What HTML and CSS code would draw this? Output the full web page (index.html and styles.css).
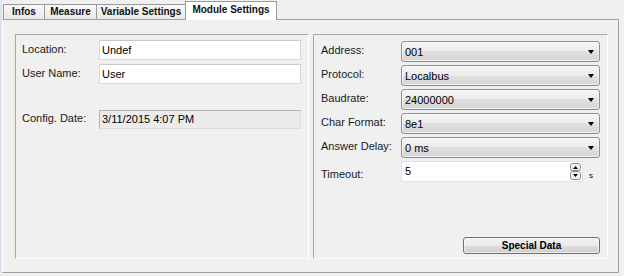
FILE: index.html
```html
<!DOCTYPE html>
<html>
<head>
<meta charset="utf-8">
<link rel="stylesheet" href="styles.css">
</head>
<body>
<div class="app">
  <div class="tabs">
    <div class="tab tab-infos">Infos</div>
    <div class="tab tab-measure">Measure</div>
    <div class="tab tab-var">Variable Settings</div>
    <div class="tab tab-active">Module Settings</div>
  </div>
  <div class="page">
    <div class="group group-left">
      <div class="row">
        <span class="label label-left">Location:</span>
        <div class="textbox">Undef</div>
      </div>
      <div class="row">
        <span class="label label-left">User Name:</span>
        <div class="textbox">User</div>
      </div>
      <div class="row row-date">
        <span class="label label-left">Config. Date:</span>
        <div class="textbox readonly">3/11/2015 4:07 PM</div>
      </div>
    </div>
    <div class="group group-right">
      <div class="crow">
        <span class="label label-right">Address:</span>
        <div class="combo"><span>001</span><span class="arrow"></span></div>
      </div>
      <div class="crow">
        <span class="label label-right">Protocol:</span>
        <div class="combo"><span>Localbus</span><span class="arrow"></span></div>
      </div>
      <div class="crow">
        <span class="label label-right">Baudrate:</span>
        <div class="combo"><span>24000000</span><span class="arrow"></span></div>
      </div>
      <div class="crow">
        <span class="label label-right">Char Format:</span>
        <div class="combo"><span>8e1</span><span class="arrow"></span></div>
      </div>
      <div class="crow">
        <span class="label label-right">Answer Delay:</span>
        <div class="combo"><span>0 ms</span><span class="arrow"></span></div>
      </div>
      <div class="crow">
        <span class="label label-right label-timeout">Timeout:</span>
        <div class="spinbox">
          <span class="spin-value">5</span>
          <svg class="spin-btns" width="11" height="17" viewBox="0 0 11 17">
            <rect x="0.5" y="0.5" width="10" height="7" rx="2" fill="#f0f0f0" stroke="#8a8a8a"/>
            <rect x="0.5" y="8.5" width="10" height="8" rx="2" fill="#f0f0f0" stroke="#8a8a8a"/>
            <path d="M3 6 L8 6 L5.5 3 Z" fill="#000"/>
            <path d="M3 11 L8 11 L5.5 14 Z" fill="#000"/>
          </svg>
        </div>
        <span class="unit">s</span>
      </div>
      <div class="button">Special Data</div>
    </div>
  </div>
</div>
</body>
</html>
```
FILE: styles.css
```css
html, body {
  margin: 0;
  padding: 0;
}
body {
  background: #f0f0f0;
  font-family: "Liberation Sans", Arial, sans-serif;
  font-size: 11px;
  color: #000;
}
.app {
  width: 622px;
  height: 273px;
  border-left: 2px solid #dbe5f1;
}
.tabs {
  display: flex;
  align-items: flex-end;
  height: 19px;
  padding-left: 1px;
}
.tab {
  box-sizing: border-box;
  height: 15px;
  border: 1px solid #9a9a9a;
  border-bottom: none;
  border-right: none;
  background: linear-gradient(#f8f8f8, #e8e8e8);
  font-weight: bold;
  font-size: 10px;
  line-height: 14px;
  text-align: center;
  color: #111;
}
.tab-infos { width: 41px; }
.tab-measure { width: 52px; }
.tab-var { width: 90px; border-right: 1px solid #9a9a9a; }
.tab-active {
  width: 92px;
  height: 19px;
  margin-left: -1px;
  margin-bottom: -1px;
  position: relative;
  z-index: 1;
  background: #fff;
  border-right: 1px solid #9a9a9a;
  line-height: 15px;
}
.page {
  box-sizing: border-box;
  width: 617px;
  height: 254px;
  border: 1px solid #a0a0a0;
  border-left-color: #fff;
  background: #f0f0f0;
  display: flex;
  gap: 4px;
  padding: 14px 0 0 12px;
}
.group {
  box-sizing: border-box;
  height: 225px;
  border: 1px solid;
  border-color: #a8a8a8 #fff #fff #a8a8a8;
}
.group-left {
  width: 294px;
  padding: 5px 0 0 6px;
  display: flex;
  flex-direction: column;
  gap: 4px;
}
.group-right {
  width: 295px;
  padding: 6px 0 0 7px;
  display: flex;
  flex-direction: column;
  gap: 3px;
}
.row, .crow {
  display: flex;
  align-items: center;
}
.row-date {
  margin-top: 22px;
}
.label {
  padding-bottom: 3px;
  white-space: nowrap;
  color: #1a1a1a;
}
.label-left { width: 77px; }
.label-right { width: 80px; }
.label-timeout {
  padding-bottom: 0;
  padding-top: 5px;
}
.textbox {
  box-sizing: border-box;
  width: 202px;
  height: 20px;
  background: #fff;
  border: 1px solid #dadada;
  border-top-color: #c9c9c9;
  padding: 2px 0 0 2px;
  line-height: 15px;
}
.readonly {
  height: 19px;
  background: #ebebeb;
  border-color: #b4b4b4 #dcdcdc #dcdcdc #b4b4b4;
  padding-top: 1px;
}
.combo {
  box-sizing: border-box;
  width: 199px;
  height: 21px;
  border: 1px solid #8e8f8f;
  border-radius: 3px;
  background: linear-gradient(#f4f4f4 0%, #ececec 50%, #e0e0e0 50%, #d6d6d6 100%);
  box-shadow: inset 0 0 0 1px rgba(255,255,255,0.6);
  display: flex;
  align-items: center;
  justify-content: space-between;
  padding: 0 5px 0 3px;
}
.arrow {
  width: 0;
  height: 0;
  border-left: 3.5px solid transparent;
  border-right: 3.5px solid transparent;
  border-top: 4px solid #000;
  margin-top: 1px;
}
.spinbox {
  box-sizing: border-box;
  width: 182px;
  height: 21px;
  background: #fff;
  border: 1px solid #e2e2e2;
  display: flex;
  align-items: center;
  justify-content: space-between;
  padding: 0 1px 0 3px;
}
.spin-value {
  margin-top: -1px;
}
.spin-btns {
  display: block;
}
.unit {
  font-size: 8px;
  margin-left: 6px;
  padding-top: 7px;
}
.button {
  box-sizing: border-box;
  width: 137px;
  height: 17px;
  margin-top: auto;
  margin-bottom: 4px;
  align-self: flex-end;
  margin-right: 7px;
  border: 1px solid #707070;
  border-radius: 3px;
  background: linear-gradient(#f2f2f2 0%, #ebebeb 50%, #dddddd 50%, #cfcfcf 100%);
  box-shadow: inset 0 0 0 1px rgba(255,255,255,0.6);
  font-weight: bold;
  font-size: 10px;
  line-height: 15px;
  text-align: center;
}
```
